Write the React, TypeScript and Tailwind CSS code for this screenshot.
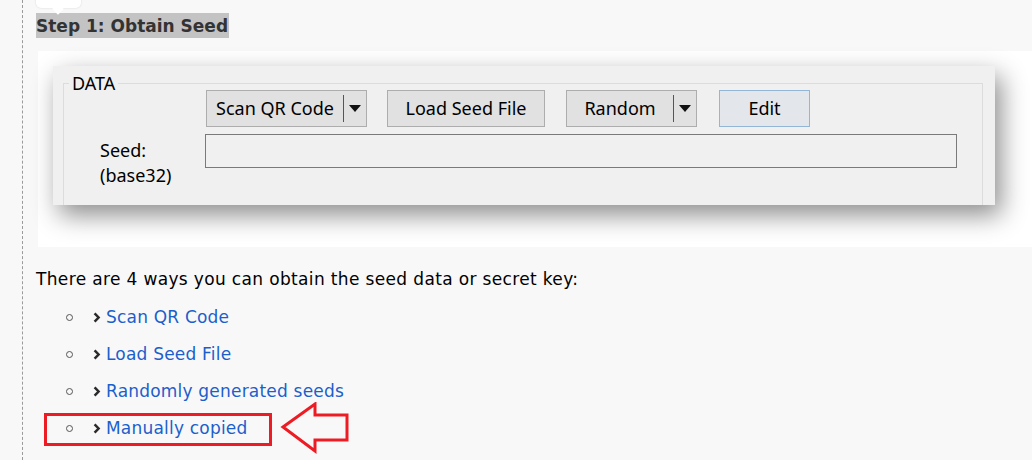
import React from "react";

const page = { fontFamily: '"DejaVu Sans", Verdana, sans-serif' };
const win = { fontFamily: '"Noto Sans", "Open Sans", sans-serif' };

function DropButton({ label, w, sep }: { label: string; w: string; sep: string }) {
  return (
    <div className={`${w} h-[37px] flex items-center bg-[#e1e1e1] border border-[#adadad] text-[18px] text-black`}>
      <span className={`${sep} flex justify-center`}>{label}</span>
      <span className="w-px h-[27px] bg-[#555]" />
      <span className="flex-1 flex justify-center">
        <svg width="12" height="7" viewBox="0 0 12 7">
          <path d="M0 0h12L6 7z" fill="#111" />
        </svg>
      </span>
    </div>
  );
}

function Item({ text }: { text: string }) {
  return (
    <li className="flex items-center h-[37px]">
      <span className="w-[7px] h-[7px] rounded-full border border-[#555] ml-[30px]" />
      <svg className="ml-[20px]" width="8" height="11" viewBox="0 0 8 11">
        <path d="M1.6 1.3 5.6 5.5 1.6 9.7" fill="none" stroke="#2a2a2a" strokeWidth="2.5" />
      </svg>
      <span className="ml-[5px] text-[#1b5fcc]">{text}</span>
    </li>
  );
}

export default function App() {
  return (
    <div className="w-[1032px] h-[460px] bg-[#f8f8f8] overflow-hidden flex relative" style={page}>
      <div className="w-[23px] shrink-0 border-r border-dashed border-[#9a9a9a]" />
      <div className="flex-1 pl-[13px] relative">
        {/* clipped tooltip bubble at the top */}
        <div className="absolute left-[13px] top-[-10px] w-[45px] h-[18px] bg-white rounded-[5px] shadow-[0_0_2px_rgba(0,0,0,0.15)]" />
        <div className="absolute left-[31px] top-[5px] w-[8px] h-[8px] bg-white rotate-45" />

        <div className="pt-[13px] h-[38px] flex items-start">
          <div className="bg-[#c3c3c3] h-[25px] pt-[1px] leading-[24px] text-[17px] font-bold text-[#333] pr-[1px]">
            Step 1: Obtain Seed
          </div>
        </div>

        <div className="mt-[13px] ml-[2px] h-[196px] bg-white pl-[15px] pt-[15px]">
          <div className="w-[942px] h-[139px] bg-[#f0f0f0] shadow-[6px_10px_24px_rgba(0,0,0,0.45)] pt-[17px] pl-[10px] pr-[12px] overflow-hidden" style={win}>
            <div className="relative border border-[#dcdcdc] h-[160px]">
              <span className="absolute left-[5px] top-[-11px] bg-[#f0f0f0] px-[3px] leading-[20px] text-[18px] text-black">DATA</span>
              <div className="flex items-center pl-[142px] pt-[6px]">
                <DropButton label="Scan QR Code" w="w-[161px]" sep="w-[136px]" />
                <div className="ml-[20px] w-[158px] h-[37px] flex items-center justify-center bg-[#e1e1e1] border border-[#adadad] text-[18px] text-black">
                  Load Seed File
                </div>
                <div className="ml-[21px]">
                  <DropButton label="Random" w="w-[131px]" sep="w-[106px]" />
                </div>
                <div className="ml-[22px] w-[91px] h-[37px] flex items-center justify-center bg-[#e3e7eb] border border-[#93b6d6] text-[18px] text-black">
                  Edit
                </div>
              </div>
              <div className="flex pt-[7px]">
                <div className="w-[141px] pl-[36px] pt-[4px] text-[18px] leading-[25px] text-black">
                  <div>Seed:</div>
                  <div>(base32)</div>
                </div>
                <div className="w-[752px] h-[34px] bg-[#f0f0f0] border border-[#7a7a7a]" />
              </div>
            </div>
          </div>
        </div>

        <p className="mt-[21px] text-[17px] tracking-[0.35px] leading-[22px] text-black">
          There are 4 ways you can obtain the seed data or secret key:
        </p>
        <ul className="mt-[9px] text-[17px] tracking-[0.2px]">
          <Item text="Scan QR Code" />
          <Item text="Load Seed File" />
          <Item text="Randomly generated seeds" />
          <Item text="Manually copied" />
        </ul>

        {/* red annotation */}
        <div className="absolute left-[21px] top-[413px] w-[228px] h-[33px] border-[3px] border-[#ed1c24]" />
        <svg className="absolute left-[257px] top-[402px]" width="70" height="52" viewBox="0 0 70 52">
          <path d="M3 25 L35 2 L35 13 L67 13 L67 38 L35 38 L35 49 Z" fill="none" stroke="#ed1c24" strokeWidth="3" strokeLinejoin="miter" />
        </svg>
      </div>
    </div>
  );
}
